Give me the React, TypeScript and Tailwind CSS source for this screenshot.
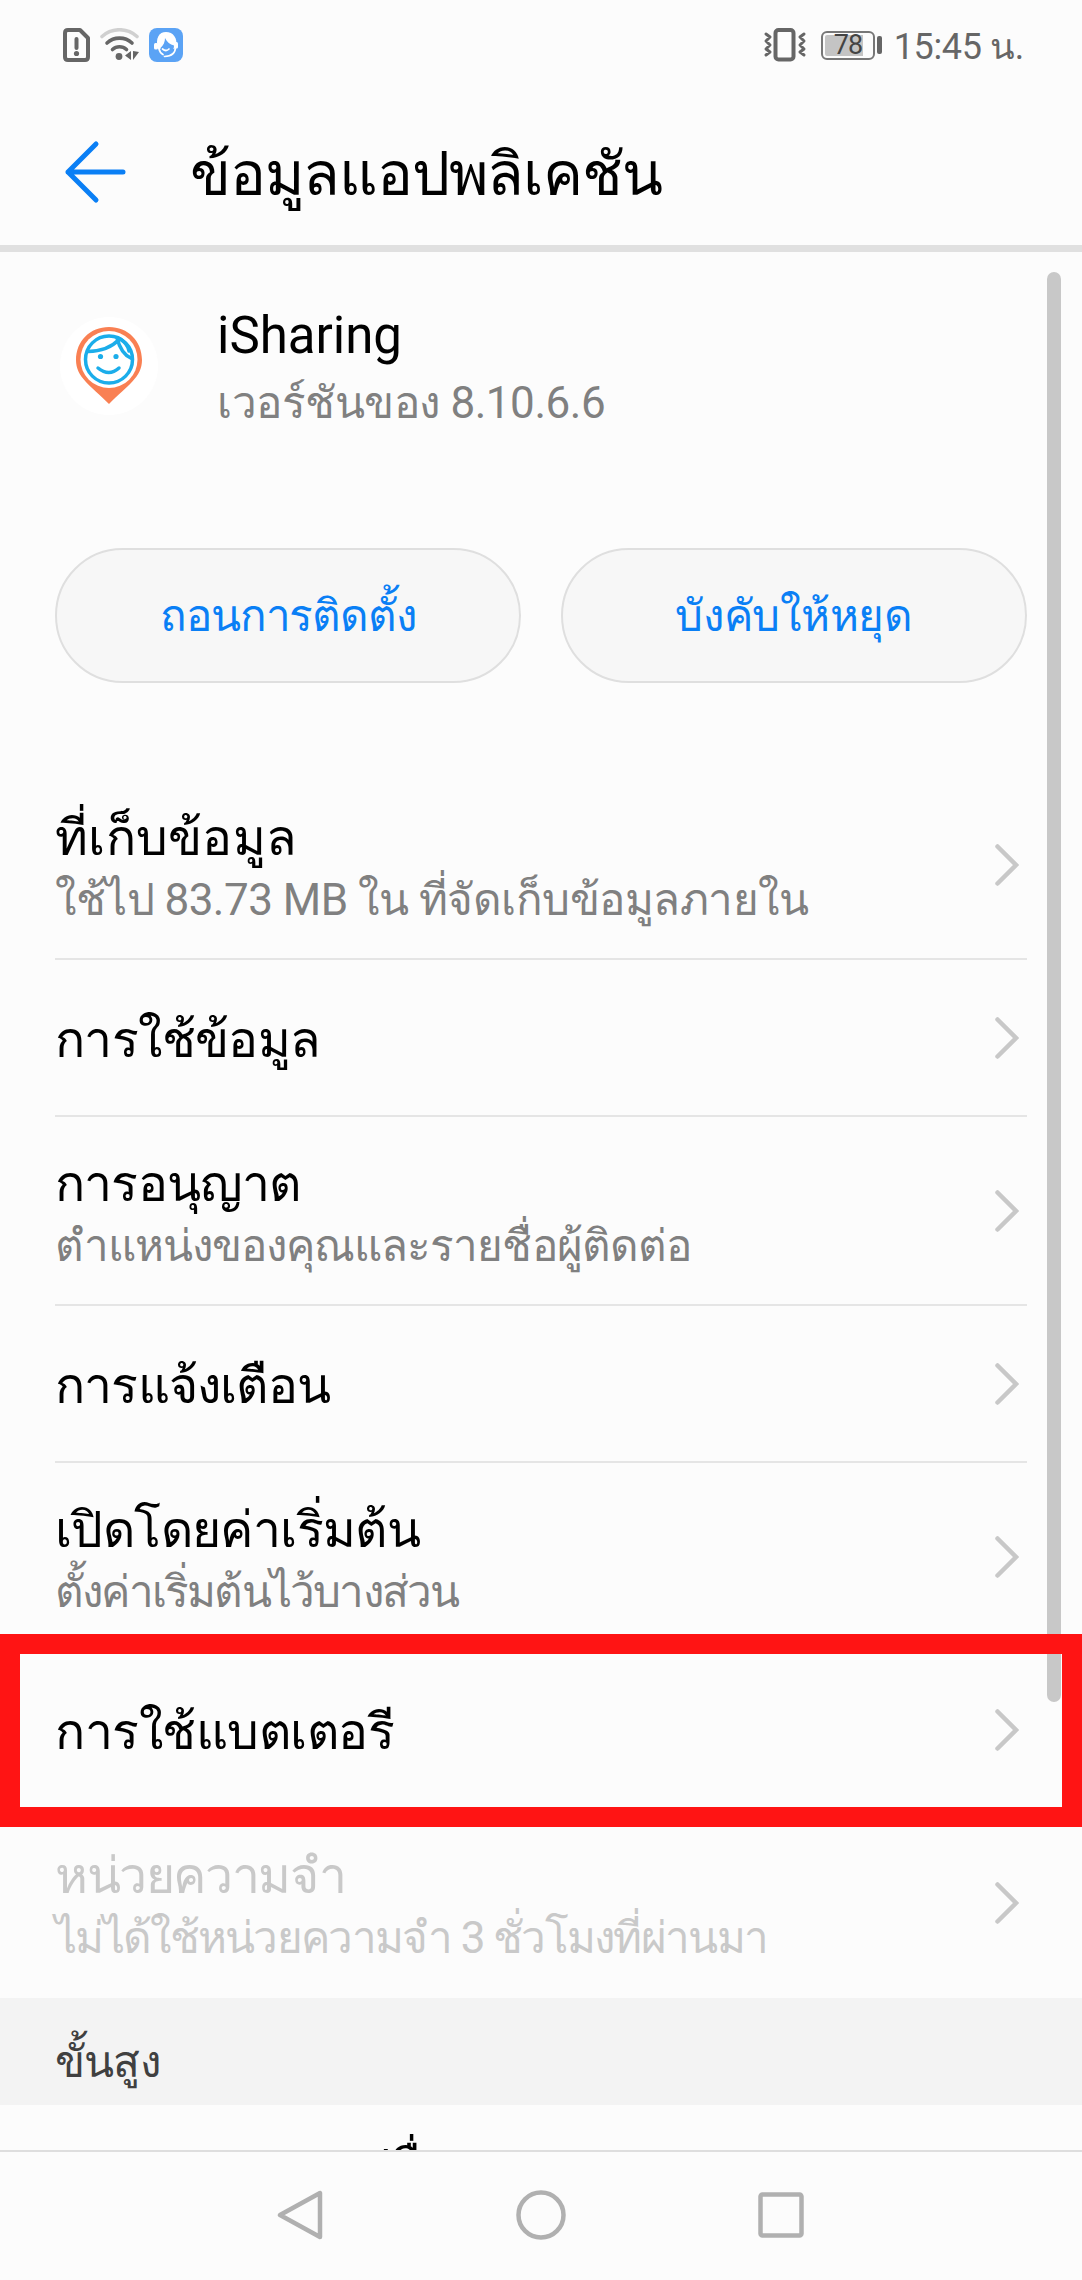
type Item = {
  title: string;
  titleClass: string;
  detail?: string;
  detailClass?: string;
  disabled?: boolean;
  noDivider?: boolean;
};

const items: Item[] = [
  {
    title: "ที่เก็บข้อมูล",
    titleClass: "tracking-[0.3px]",
    detail: "ใช้ไป 83.73 MB ใน ที่จัดเก็บข้อมูลภายใน",
    detailClass: "tracking-[-0.5px]",
  },
  { title: "การใช้ข้อมูล", titleClass: "tracking-[-0.6px]" },
  {
    title: "การอนุญาต",
    titleClass: "tracking-[-0.8px]",
    detail: "ตำแหน่งของคุณและรายชื่อผู้ติดต่อ",
    detailClass: "tracking-[-0.97px]",
  },
  { title: "การแจ้งเตือน", titleClass: "tracking-[-0.8px]" },
  {
    title: "เปิดโดยค่าเริ่มต้น",
    titleClass: "tracking-[-0.6px]",
    detail: "ตั้งค่าเริ่มต้นไว้บางส่วน",
    detailClass: "tracking-[-1.8px]",
  },
  { title: "การใช้แบตเตอรี", titleClass: "tracking-[-0.5px]" },
  {
    title: "หน่วยความจำ",
    titleClass: "tracking-[-1.4px]",
    detail: "ไม่ได้ใช้หน่วยความจำ 3 ชั่วโมงที่ผ่านมา",
    detailClass: "tracking-[-1.7px]",
    disabled: true,
    noDivider: true,
  },
];

function StatusBar() {
  return (
    <div className="flex h-[90px] shrink-0 items-center pr-[58px] pl-[63px] text-[#666]">
      <svg width="28" height="34" viewBox="0 0 28 34" fill="none" stroke="currentColor" strokeWidth="4" strokeLinejoin="round" className="mr-[9px]">
        <path d="M5 2h12l8 8v19q0 3-3 3H5q-3 0-3-3V5q0-3 3-3z" />
        <path d="M13.500 11v9" strokeLinecap="round" />
        <circle cx="13.500" cy="25.500" r="2.600" fill="currentColor" stroke="none" />
      </svg>
      <svg width="40" height="34" viewBox="0 0 40 34" fill="none" stroke="currentColor" strokeWidth="3.600" strokeLinecap="round" className="mr-[9px]">
        <path d="M2 8.500C12-.5 27-.5 37 8.500" stroke="#d0d0d0" />
        <path d="M7 15C14 8.500 25 8.500 32 15" />
        <path d="M12.500 21.500c4-3.700 10-3.700 14 0" />
        <circle cx="19" cy="28.500" r="3.400" fill="currentColor" stroke="none" />
        <path d="M31 23v9l-6-4.500zM33 23v9l6-8z" fill="currentColor" stroke="none" />
      </svg>
      <svg width="34" height="34" viewBox="0 0 34 34">
        <rect width="34" height="34" rx="8" fill="#5ba3f5" />
        <path d="M9 21C6 10 10 4 17 4s12 6 10 15l-2 2z" fill="#fff" />
        <path d="M11.500 20c3-3 4.500-6 4.500-10 2 4 5 6.500 9 7.500 0 6-4 8.500-7.500 8.500s-6-3-6-6z" fill="#5ba3f5" />
        <path d="M10 21Q11 25 14 26.500M26.500 19q0 9-11 9.500M13.500 21q3.500 3 6.500 0" fill="none" stroke="#fff" strokeWidth="1.700" strokeLinecap="round" />
        <rect x="5" y="15" width="4" height="6.500" rx="1.500" fill="#fff" />
        <rect x="25" y="14" width="4" height="6.500" rx="1.500" fill="#fff" />
      </svg>
      <svg width="44" height="34" viewBox="0 0 44 34" fill="none" stroke="currentColor" className="mr-[14px] ml-auto">
        <rect x="12.500" y="2" width="18" height="29.500" rx="3" strokeWidth="4" />
        <path d="M3 6l4 3-4 4 4 4-4 4 4 3-4 3M41 6l-4 3 4 4-4 4 4 4-4 3 4 3" strokeWidth="3" strokeLinecap="round" strokeLinejoin="round" />
      </svg>
      <div className="mr-[12px] flex items-center gap-[2px]">
        <div className="h-[29px] w-[54px] rounded-[6px] border-2 border-[#777] p-[2px]">
          <div className="flex h-full w-[38px] items-center rounded-l-[2px] bg-[#c4c4c4] pl-[9px]">
            <span className="text-[27px] leading-none tracking-[-1px] text-[#444]">78</span>
          </div>
        </div>
        <div className="h-[18px] w-[5px] rounded-[2px] bg-[#666]" />
      </div>
      <span className="pt-[3px] text-[36px] leading-[40px] tracking-[-0.35px] whitespace-nowrap">15:45 น.</span>
    </div>
  );
}

function AppLogo() {
  return (
    <svg width="102" height="112" viewBox="0 0 102 112" fill="none" className="mr-[58px] ml-[57px]">
      <circle cx="52" cy="60" r="49" fill="#fff" />
      <path d="M52 21C33 21 19 35 19 54c0 17 14 25 33 44 19-19 33-27 33-44 0-19-14-33-33-33z" fill="#f98053" />
      <circle cx="52" cy="53.500" r="28.500" fill="#fff" />
      <g stroke="#1badea" strokeWidth="3.500" strokeLinecap="round">
        <circle cx="52" cy="53.500" r="23.500" />
        <path d="M31 45.500Q51 45 61.500 34M60 32q4 16 14.500 20.500M63 33q8 5 9 12" />
        <path d="M41 62q11 9 21 0" />
      </g>
      <circle cx="43.500" cy="50.500" r="2.600" fill="#1badea" />
      <circle cx="59" cy="50.500" r="2.600" fill="#1badea" />
    </svg>
  );
}

function Chevron() {
  return (
    <svg width="26" height="44" viewBox="0 0 26 44" fill="none" stroke="#c8c8c8" strokeWidth="4.500" strokeLinecap="round" className="mr-[7px] shrink-0">
      <path d="M3.500 3.500L22 22 3.500 40.500" />
    </svg>
  );
}

function Row({ item }: { item: Item }) {
  return (
    <div
      className={`flex items-center justify-between border-b-2 ${item.detail ? "h-[189px]" : "h-[157px]"} ${
        item.noDivider ? "border-transparent" : "border-[#e5e5e5]"
      }`}
    >
      <div
        className={`whitespace-nowrap ${item.detail ? "pt-[9px]" : "pt-[5px]"} ${
          item.disabled ? "text-[#c9c9c9]" : "text-black"
        }`}
      >
        <p className={`text-[50px] leading-[62px] ${item.titleClass}`}>{item.title}</p>
        {item.detail && (
          <p className={`text-[44px] leading-[62px] ${item.detailClass} ${item.disabled ? "" : "text-[#808080]"}`}>
            {item.detail}
          </p>
        )}
      </div>
      <Chevron />
    </div>
  );
}

export default function App() {
  return (
    <div className="relative flex h-[2280px] w-[1082px] flex-col overflow-hidden bg-[#fcfcfc] font-[Roboto,sans-serif]">
      <StatusBar />
      <header className="flex h-[162px] shrink-0 items-center border-b-[7px] border-[#e0e0e0] pt-[8px] pl-[64px]">
        <svg width="64" height="64" viewBox="0 0 64 64" fill="none" stroke="#0a7ff5" strokeWidth="5" strokeLinecap="round" strokeLinejoin="round">
          <path d="M32 4L4 32l28 28M4 32h55" />
        </svg>
        <h1 className="ml-[62px] pt-[6px] text-[60px] leading-[80px] tracking-[-1.2px] whitespace-nowrap">ข้อมูลแอปพลิเคชัน</h1>
      </header>

      <main className="h-[1898px] shrink-0 overflow-hidden">
        <section className="flex h-[296px] items-start pt-[54px]">
          <AppLogo />
          <div>
            <h2 className="text-[51px] leading-[60px]">iSharing</h2>
            <p className="mt-[6px] text-[44px] leading-[62px] tracking-[-0.45px] text-[#808080]">เวอร์ชันของ 8.10.6.6</p>
          </div>
        </section>

        <div className="flex h-[223px] items-start gap-[40px] px-[55px] text-[44px] text-[#0a7ff5]">
          <button className="h-[135px] flex-1 rounded-full border-2 border-[#dfdfdf] bg-[#f7f7f7] tracking-[-1.2px]">ถอนการติดตั้ง</button>
          <button className="h-[135px] flex-1 rounded-full border-2 border-[#dfdfdf] bg-[#f7f7f7] tracking-[-0.3px]">บังคับให้หยุด</button>
        </div>

        <div className="px-[55px]">
          {items.map((item) => (
            <Row key={item.title} item={item} />
          ))}
        </div>

        <div className="flex h-[107px] items-center bg-[#f3f3f3] px-[55px] pt-[21px] text-[44px] tracking-[-0.8px] text-[#404040]">ขั้นสูง</div>
        <p className="px-[55px] pt-[32px] text-[50px] leading-[62px] tracking-[-0.3px] whitespace-nowrap">แสดงผลบนแอปอื่น</p>
      </main>

      <nav className="flex grow items-center justify-center border-t-2 border-[#dedede] pb-[2px]">
        <div className="flex items-center gap-[191px]">
          <svg width="50" height="50" viewBox="0 0 50 50" fill="none" stroke="#b0b0b0" strokeWidth="4.500" strokeLinejoin="round">
            <path d="M45 3v44L5 25z" />
          </svg>
          <svg width="50" height="50" viewBox="0 0 50 50" fill="none" stroke="#b0b0b0" strokeWidth="4.500">
            <circle cx="25" cy="25" r="22.500" />
          </svg>
          <svg width="50" height="50" viewBox="0 0 50 50" fill="none" stroke="#b0b0b0" strokeWidth="4.500">
            <rect x="3.500" y="4.500" width="41" height="41" rx="2" />
          </svg>
        </div>
      </nav>

      {/* scrollbar thumb and highlight frame sit over the list */}
      <div className="absolute top-[272px] left-[1047px] h-[1430px] w-[14px] rounded-full bg-[#c8c8c8]" />
      <div className="absolute top-[1634px] left-0 h-[193px] w-full border-[20px] border-[#ff1414]" />
    </div>
  );
}
